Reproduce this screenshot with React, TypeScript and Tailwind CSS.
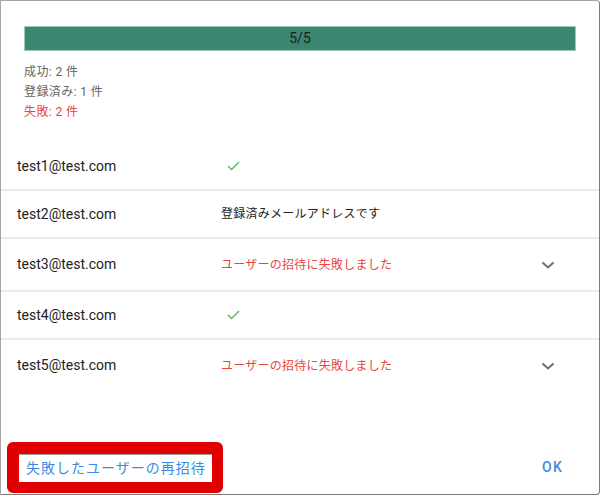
import React from 'react'

type Row = {
  email: string
  status: 'ok' | 'registered' | 'failed'
}

const rows: Row[] = [
  { email: 'test1@test.com', status: 'ok' },
  { email: 'test2@test.com', status: 'registered' },
  { email: 'test3@test.com', status: 'failed' },
  { email: 'test4@test.com', status: 'ok' },
  { email: 'test5@test.com', status: 'failed' },
]

function Check() {
  return (
    <svg width="13" height="10" viewBox="0 0 13 10" className="ml-[6px]">
      <polyline points="1,5 4.5,8.5 12,1" fill="none" stroke="#5cb85c" strokeWidth="1.4" />
    </svg>
  )
}

function Chevron() {
  return (
    <svg width="14" height="8" viewBox="0 0 14 8">
      <polyline points="1.5,1.5 7,6.5 12.5,1.5" fill="none" stroke="#6e6e6e" strokeWidth="2" />
    </svg>
  )
}

function ResultRow({ row, last }: { row: Row; last: boolean }) {
  const failed = row.status === 'failed'
  return (
    <div
      className={`flex items-center ${failed ? (last ? 'h-[51px]' : 'h-[53px]') : 'h-[48px]'} ${
        last ? '' : 'border-b-2 border-[#ebebeb]'
      }`}
    >
      <div className="w-[220px] pl-[16px] text-[14px] text-[#222]">{row.email}</div>
      <div className="flex-1 text-[12px] tracking-[0.25px]">
        {row.status === 'ok' && <Check />}
        {row.status === 'registered' && <span className="text-[#222]">登録済みメールアドレスです</span>}
        {failed && <span className="text-[#e8453c]">ユーザーの招待に失敗しました</span>}
      </div>
      {failed && (
        <div className="w-[24px] h-[24px] mr-[39px] flex items-center justify-center">
          <Chevron />
        </div>
      )}
    </div>
  )
}

export default function App() {
  return (
    <div className="w-[601px] h-[496px] bg-white font-['Roboto','Noto_Sans_CJK_JP',sans-serif]">
      <div className="w-[600px] h-[495px] flex flex-col border border-[#a5a5a5] border-r-[#7b7b7b] border-b-[#7b7b7b] rounded-r-[4px]">
        <div className="px-[23px] pt-[25px]">
          <div className="h-[25px] bg-[#3b8670] border border-[#9ccab9] flex items-center justify-center text-[14px] text-[#1b1b1b]">
            5/5
          </div>
          <div className="mt-[11px] text-[12px] leading-[20px] tracking-[0.4px] text-[#666]">
            <div>成功: 2 件</div>
            <div>登録済み: 1 件</div>
            <div className="text-[#e8453c]">失敗: 2 件</div>
          </div>
        </div>

        <div className="mt-[21px]">
          {rows.map((row, i) => (
            <ResultRow key={row.email} row={row} last={i === rows.length - 1} />
          ))}
        </div>

        <div className="mt-auto flex items-center justify-between pl-[6px] pr-[36px] pb-[1px]">
          <div className="w-[216px] h-[51px] border-[#e00000] border-t-[12px] border-l-[12px] border-r-[11px] border-b-[11px] rounded-[6px]">
            <button className="w-full h-full border-t border-[#a0a0a0] bg-white flex items-center pl-[7px] text-[14px] tracking-[1px] text-[#3f8ae0] whitespace-nowrap">
              失敗したユーザーの再招待
            </button>
          </div>
          <button className="text-[14px] font-medium tracking-[1.25px] text-[#3f8ae0]">OK</button>
        </div>
      </div>
    </div>
  )
}
